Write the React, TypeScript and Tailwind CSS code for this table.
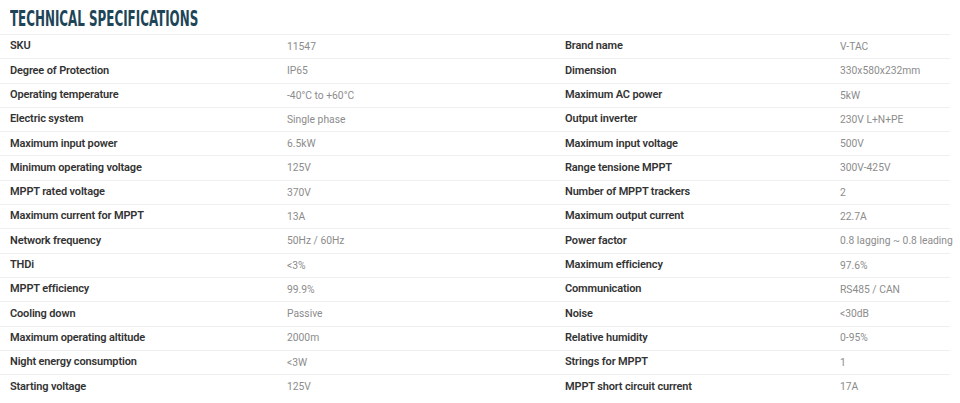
import React from 'react';

const left: [string, string][] = [
  ['SKU', '11547'],
  ['Degree of Protection', 'IP65'],
  ['Operating temperature', '-40°C to +60°C'],
  ['Electric system', 'Single phase'],
  ['Maximum input power', '6.5kW'],
  ['Minimum operating voltage', '125V'],
  ['MPPT rated voltage', '370V'],
  ['Maximum current for MPPT', '13A'],
  ['Network frequency', '50Hz / 60Hz'],
  ['THDi', '<3%'],
  ['MPPT efficiency', '99.9%'],
  ['Cooling down', 'Passive'],
  ['Maximum operating altitude', '2000m'],
  ['Night energy consumption', '<3W'],
  ['Starting voltage', '125V'],
];

const right: [string, string][] = [
  ['Brand name', 'V-TAC'],
  ['Dimension', '330x580x232mm'],
  ['Maximum AC power', '5kW'],
  ['Output inverter', '230V L+N+PE'],
  ['Maximum input voltage', '500V'],
  ['Range tensione MPPT', '300V-425V'],
  ['Number of MPPT trackers', '2'],
  ['Maximum output current', '22.7A'],
  ['Power factor', '0.8 lagging ~ 0.8 leading'],
  ['Maximum efficiency', '97.6%'],
  ['Communication', 'RS485 / CAN'],
  ['Noise', '<30dB'],
  ['Relative humidity', '0-95%'],
  ['Strings for MPPT', '1'],
  ['MPPT short circuit current', '17A'],
];

const SpecTable: React.FC<{ rows: [string, string][]; cols: string }> = ({ rows, cols }) => (
  <div className="flex flex-col">
    {rows.map(([label, value]) => (
      <div key={label} className={`grid ${cols} items-center h-[24.3px] border-t border-[#efefef] pl-[10px]`}>
        <span className="text-[11px] font-semibold tracking-[-0.15px] text-[#333]">{label}</span>
        <span className="text-[10.3px] font-normal text-[#8c8c8c] whitespace-nowrap">{value}</span>
      </div>
    ))}
  </div>
);

export default function App() {
  return (
    <div className="w-[960px] h-[403px] bg-white overflow-hidden font-['Roboto',sans-serif]">
      <div className="pl-[10px] pt-[7px] h-[34px]">
        <h2 className="inline-block origin-left scale-x-[0.63] whitespace-nowrap text-[21px] leading-[24px] font-bold uppercase text-[#1d4557] font-['DejaVu_Sans_Condensed',sans-serif]">
          Technical Specifications
        </h2>
      </div>
      <div className="grid grid-cols-[555px_395px]">
        <SpecTable rows={left} cols="grid-cols-[277px_1fr]" />
        <SpecTable rows={right} cols="grid-cols-[275px_1fr]" />
      </div>
    </div>
  );
}
